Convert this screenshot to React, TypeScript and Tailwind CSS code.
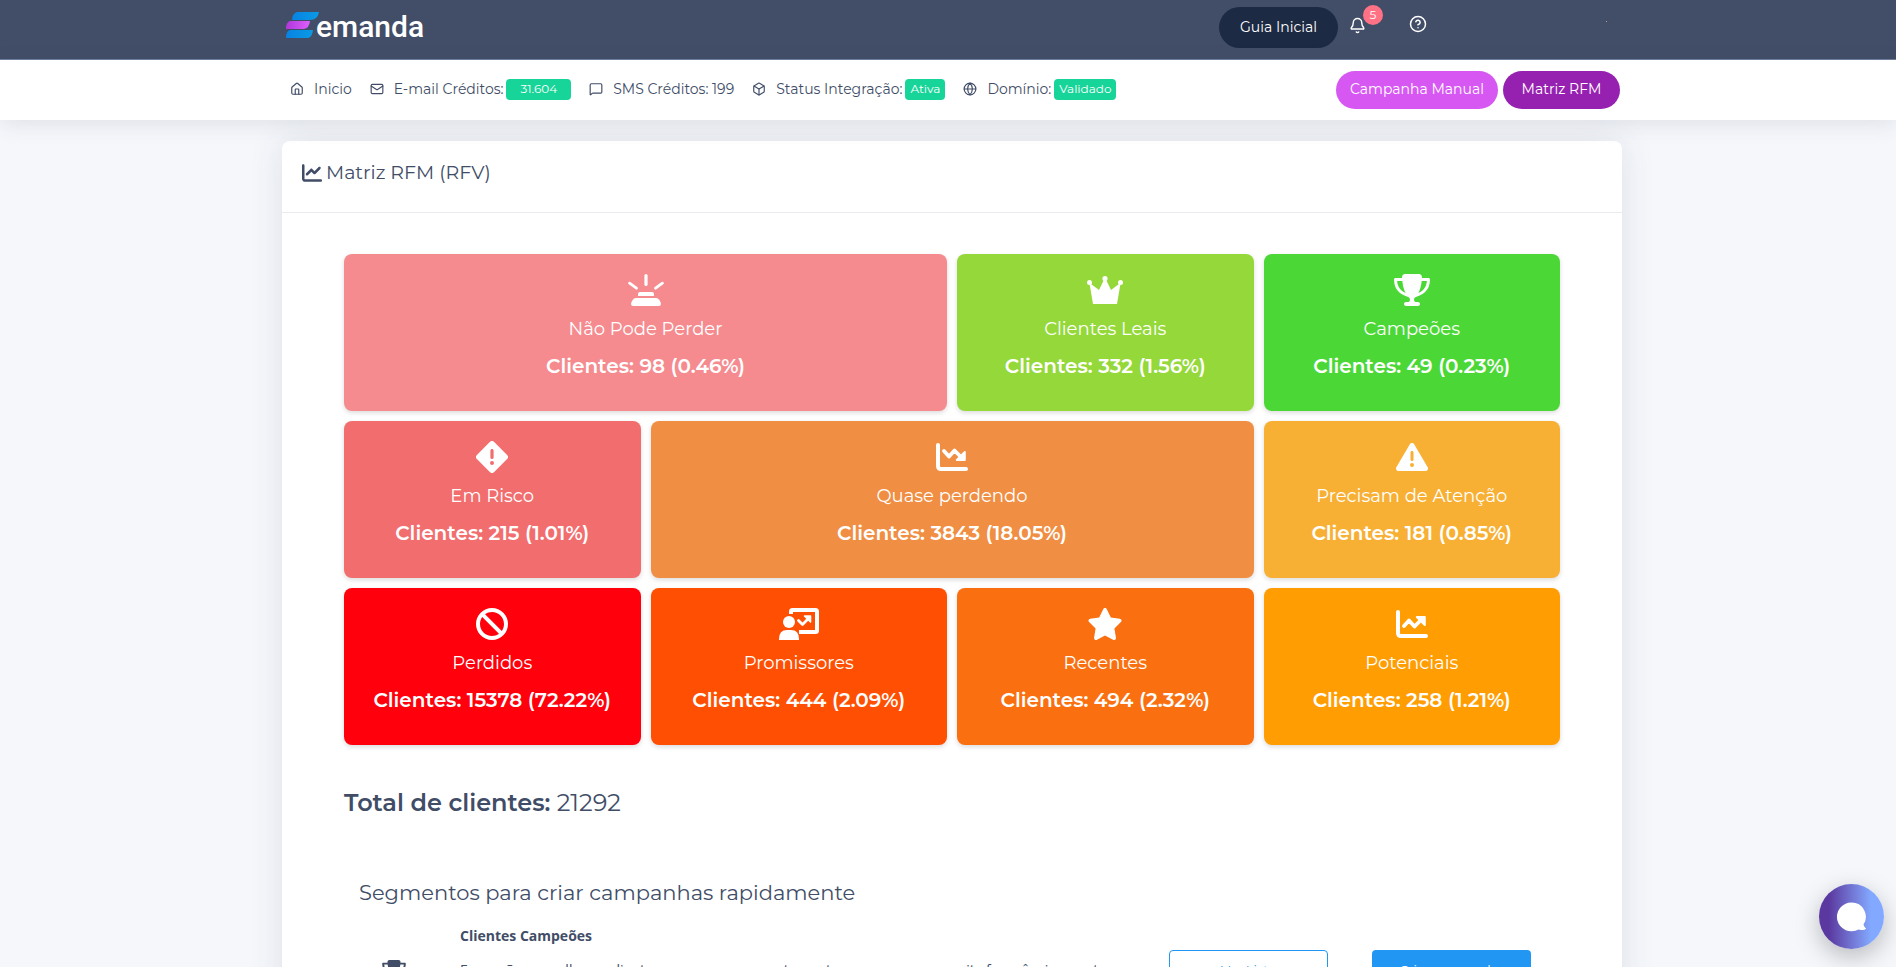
import type { ReactNode } from "react";
import { Bell, Box, CircleHelp, Globe, House, Mail, MessageSquare } from "lucide-react";
import { FaBan, FaChartLine, FaStar, FaTriangleExclamation, FaTrophy } from "react-icons/fa6";

interface Segment {
  name: string;
  clients: string;
  color: string;
  icon: ReactNode;
}

const SirenIcon = () => (
  <svg width="36" height="32" viewBox="0 0 36 32" fill="currentColor">
    <g stroke="currentColor" strokeLinecap="round">
      <path d="M18 1.600v8.800" strokeWidth="3.2" />
      <path d="M1.600 9.200l6.800 5M34.400 9.200l-6.800 5" strokeWidth="2.8" />
    </g>
    <path d="M12 18h12q2 0 2 2v2H10v-2q0-2 2-2zM8 24h20q2.200 0 3.200 1.800l1.600 3q.6 3.200-2 3.200H5.200q-2.600 0-2-3.200l1.600-3Q5.800 24 8 24z" />
  </svg>
);

const CrownIcon = () => (
  <svg width="36" height="32" viewBox="0 -2 36 32" fill="currentColor">
    <circle cx="2.500" cy="6.500" r="2.500" />
    <circle cx="18" cy="2.600" r="2.600" />
    <circle cx="33.500" cy="6.500" r="2.500" />
    <path d="M2.500 7.500L4 8l8 6 4.800-10h2.400L24 14l8-6 1.500-.5L30 28H6z" />
  </svg>
);

const DiamondIcon = () => (
  <svg width="32" height="32" viewBox="0 0 32 32">
    <path
      fill="currentColor"
      fillRule="evenodd"
      d="M13.800 1l-12.900 12.900a3 3 0 0 0 0 4.200L13.800 31a3 3 0 0 0 4.400 0l12.900-12.900a3 3 0 0 0 0-4.200L18.200 1a3 3 0 0 0-4.400 0zM16 8c.9 0 1.600.7 1.600 1.500v7a1.600 1.500 0 0 1-3.200 0v-7C14.400 8.700 15.100 8 16 8zm0 12a2 2 0 1 1 0 4 2 2 0 0 1 0-4z"
    />
  </svg>
);

const ChartDownIcon = () => (
  <svg width="32" height="32" viewBox="0 -2 32 32" fill="none" stroke="currentColor" strokeLinecap="round" strokeLinejoin="round">
    <path d="M2 2v21q0 3 3 3h25" strokeWidth="4" />
    <path d="M8 8l5 5.500 5.500-6L25 14" strokeWidth="3.800" />
    <path d="M28.800 9v8h-8z" fill="currentColor" strokeWidth="2" />
  </svg>
);

const ChartUpIcon = () => (
  <svg width="32" height="32" viewBox="0 -2 32 32" fill="none" stroke="currentColor" strokeLinecap="round" strokeLinejoin="round">
    <path d="M2 2v21q0 3 3 3h25" strokeWidth="4" />
    <path d="M8 16l5-5.500 5.500 6L25 10" strokeWidth="3.800" />
    <path d="M28.800 15V7h-8z" fill="currentColor" strokeWidth="2" />
  </svg>
);

const PresenterIcon = () => (
  <svg width="40" height="32" viewBox="0 0 40 32" fill="currentColor">
    <circle cx="10" cy="14" r="6" />
    <path d="M0 32v-1q0-9 8-9h4q8 0 8 9v1z" />
    <g fill="none" stroke="currentColor" strokeLinejoin="round">
      <path d="M12 6V3.500Q12 2 13.500 2h23Q38 2 38 3.500v19q0 1.500-1.500 1.500H20" strokeWidth="4" />
      <path d="M19.500 12.500l4 4 6-6" strokeWidth="2.800" strokeLinecap="round" />
      <path d="M31.500 14V8h-6z" fill="currentColor" strokeWidth="1.600" />
    </g>
  </svg>
);

const segments: Segment[] = [
  { name: "Não Pode Perder", clients: "98 (0.46%)", color: "col-span-2 bg-[#f58b8f]", icon: <SirenIcon /> },
  { name: "Clientes Leais", clients: "332 (1.56%)", color: "bg-[#94d83a]", icon: <CrownIcon /> },
  { name: "Campeões", clients: "49 (0.23%)", color: "bg-[#4bd837]", icon: <FaTrophy className="h-8 w-9" /> },
  { name: "Em Risco", clients: "215 (1.01%)", color: "bg-[#f26d6e]", icon: <DiamondIcon /> },
  { name: "Quase perdendo", clients: "3843 (18.05%)", color: "col-span-2 bg-[#f08e43]", icon: <ChartDownIcon /> },
  { name: "Precisam de Atenção", clients: "181 (0.85%)", color: "bg-[#f8b034]", icon: <FaTriangleExclamation className="h-8 w-8" /> },
  { name: "Perdidos", clients: "15378 (72.22%)", color: "bg-[#ff000c]", icon: <FaBan className="h-8 w-8" /> },
  { name: "Promissores", clients: "444 (2.09%)", color: "bg-[#ff4f02]", icon: <PresenterIcon /> },
  { name: "Recentes", clients: "494 (2.32%)", color: "bg-[#fa7010]", icon: <FaStar className="h-8 w-9" /> },
  { name: "Potenciais", clients: "258 (1.21%)", color: "bg-[#ff9d02]", icon: <ChartUpIcon /> },
];

const Logo = () => (
  <a href="#" aria-label="emanda" className="flex items-start">
    <svg width="35" height="28" viewBox="0 0 35 28">
      <defs>
        <linearGradient id="logoBlue">
          <stop offset="0" stopColor="#0783e3" />
          <stop offset="1" stopColor="#0a9ae4" />
        </linearGradient>
        <linearGradient id="logoPink">
          <stop offset="0" stopColor="#b036dc" />
          <stop offset="1" stopColor="#dc60fb" />
        </linearGradient>
      </defs>
      <path d="M12 1h22q-1.500 8-9 8H7q.5-7 5-8z" fill="url(#logoBlue)" />
      <path d="M5 10h20q-1 7.500-6 8H1q0-7 4-8z" fill="url(#logoPink)" />
      <path d="M5 19h23q-1 7.500-5 8H1q0-7 4-8z" fill="url(#logoBlue)" />
    </svg>
    <span className="-ml-1 pt-0.5 font-['Roboto',sans-serif] text-[30px] leading-7 font-medium text-white">emanda</span>
  </a>
);

const StatusBadge = ({ children, wide }: { children: ReactNode; wide?: boolean }) => (
  <span
    className={`ml-[3px] inline-flex h-[21px] items-center rounded-sm bg-[#17d499] text-xs text-white ${wide ? "px-3.5" : "px-[5px]"}`}
  >
    {children}
  </span>
);

const NavItem = ({ icon, children }: { icon: ReactNode; children: ReactNode }) => (
  <li>
    <a href="#" className="flex items-center whitespace-nowrap">
      <span className="mr-2.5">{icon}</span>
      {children}
    </a>
  </li>
);

export default function App() {
  return (
    <div className="min-h-screen bg-[#f5f7fb] font-['Montserrat','Inter',sans-serif] text-sm text-[#414d67]">
      <header className="border-b border-[#7180a0] bg-[#424e67] pl-2">
        <div className="mx-auto flex h-[59px] max-w-[1340px] items-start justify-between pr-[15px] pl-[3px]">
          <div className="pt-[11px]">
            <Logo />
          </div>
          <div className="flex items-start text-white">
            <button className="mt-[7px] h-[41px] w-[119px] rounded-full bg-[#1d2a43] pb-0.5">Guia Inicial</button>
            <button aria-label="Notificações" className="relative mt-[17px] ml-[11px]">
              <Bell size={17} strokeWidth={2} />
              <span className="absolute -top-3 left-3.5 flex h-5 w-5 items-center justify-center rounded-full bg-[#ff7285] text-xs">
                5
              </span>
            </button>
            <button aria-label="Ajuda" className="mt-[15px] mr-[179px] ml-[43px]">
              <CircleHelp size={18} strokeWidth={2} />
            </button>
            <span className="mt-[21px] h-px w-px bg-[#c09a80]" />
          </div>
        </div>
      </header>

      <nav className="relative bg-white pl-2 shadow-[0_4px_22px_rgba(60,65,90,0.12)]">
        <div className="mx-auto flex h-[60px] max-w-[1340px] items-center justify-between pr-0.5 pl-2">
          <ul className="flex items-center gap-[18px] pb-0.5">
            <NavItem icon={<House size={14} strokeWidth={2} />}>Inicio</NavItem>
            <NavItem icon={<Mail size={14} strokeWidth={2} />}>
              E-mail Créditos: <StatusBadge wide>31.604</StatusBadge>
            </NavItem>
            <NavItem icon={<MessageSquare size={14} strokeWidth={2} />}>SMS Créditos: 199</NavItem>
            <NavItem icon={<Box size={14} strokeWidth={2} />}>
              Status Integração: <StatusBadge>Ativa</StatusBadge>
            </NavItem>
            <NavItem icon={<Globe size={14} strokeWidth={2} />}>
              Domínio: <StatusBadge>Validado</StatusBadge>
            </NavItem>
          </ul>
          <div className="flex gap-[5px] text-white">
            <button className="h-[38px] w-[162px] rounded-full bg-[#d757f3] pb-0.5">Campanha Manual</button>
            <button className="h-[38px] w-[117px] rounded-full bg-[#9621b0] pb-0.5">Matriz RFM</button>
          </div>
        </div>
      </nav>

      <main className="pt-[21px] pl-2">
        <section className="mx-auto max-w-[1340px] rounded-lg bg-white pb-12 shadow-[0_0_34px_rgba(60,65,90,0.12)]">
          <h1 className="flex h-[72px] items-start gap-1 border-b border-[#e9ebf0] px-5 pt-[18px] text-[19px] leading-7">
            <FaChartLine className="mt-1 h-5 w-5" />
            Matriz RFM (RFV)
          </h1>

          <div className="px-[62px] pt-[41px]">
            <div className="grid grid-cols-4 gap-2.5">
              {segments.map((segment) => (
                <article
                  key={segment.name}
                  className={`flex h-[157px] flex-col items-center rounded-lg pt-5 text-white shadow-[0_2px_5px_rgba(0,0,0,0.14)] ${segment.color}`}
                >
                  {segment.icon}
                  <h2 className="mt-[9px] text-lg leading-7">{segment.name}</h2>
                  <p className="mt-[7px] text-xl leading-8 font-semibold">Clientes: {segment.clients}</p>
                </article>
              ))}
            </div>

            <p className="mt-[42px] text-2xl leading-8">
              <strong className="font-semibold">Total de clientes:</strong> 21292
            </p>

            <div className="px-[15px] pt-[58px]">
              <h2 className="text-[21px] leading-8">Segmentos para criar campanhas rapidamente</h2>
              <div className="mt-[7px] flex items-start">
                <FaTrophy className="mt-11 ml-[23px] h-[21px] w-6" />
                <div className="ml-[54px] w-[660px] pt-2 font-['Open_Sans',sans-serif] text-sm">
                  <h3 className="leading-6 font-bold">Clientes Campeões</h3>
                  <p className="mt-2.5 leading-6">
                    Esses são os melhores clientes, compraram recentemente, compram com muita frequência e gastam muito
                  </p>
                </div>
                <div className="ml-auto flex gap-11 pt-[34px] pr-3.5 text-[13px]">
                  <button className="h-10 w-[159px] rounded-sm border border-[#2196f3] text-[#2196f3]">Ver Lista</button>
                  <button className="h-10 w-[159px] rounded-sm bg-[#2196f3] text-white">Criar campanha</button>
                </div>
              </div>
            </div>
          </div>
        </section>
      </main>

      <button
        aria-label="Abrir chat"
        className="fixed right-3 bottom-[18px] flex h-[65px] w-[65px] items-center justify-center rounded-full bg-linear-to-r from-[#5a38a0] from-15% to-[#82a9ff] to-80% shadow-[0_8px_24px_rgba(0,0,0,0.25)]"
      >
        <svg width="30" height="30" viewBox="0 0 30 30" fill="#fff">
          <path d="M14.500 0.500a14.200 14.200 0 0 1 12 22q.8 3 2.700 4-1.700 2-5.200 1.500-1.500-.2-2.500-.6A14.400 14.400 0 1 1 14.500.5z" />
        </svg>
      </button>
    </div>
  );
}
